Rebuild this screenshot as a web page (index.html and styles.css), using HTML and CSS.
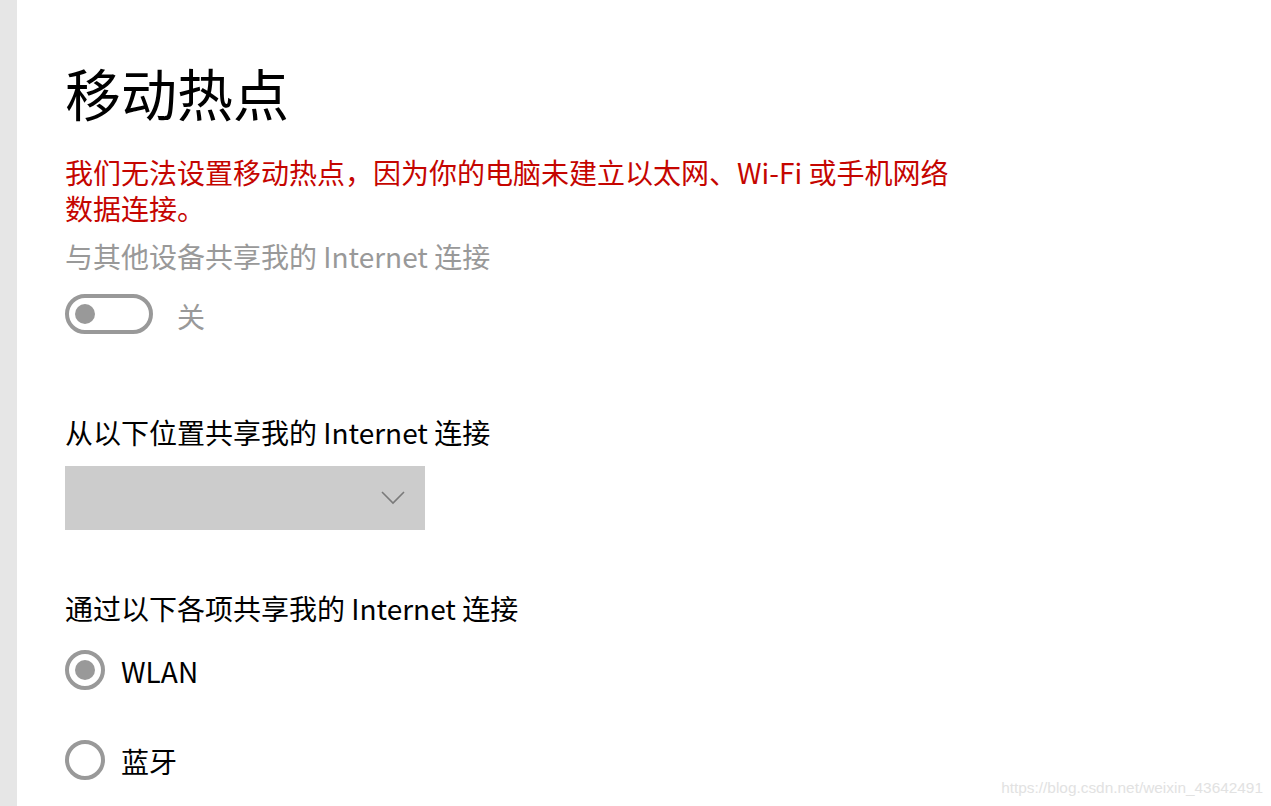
FILE: index.html
```html
<!DOCTYPE html>
<html lang="zh-CN">
<head>
<meta charset="utf-8">
<title>移动热点</title>
<link rel="stylesheet" href="styles.css">
</head>
<body>
<div class="page">
  <aside class="strip"></aside>
  <main class="main">
    <h1 class="title">移动热点</h1>
    <p class="error">我们无法设置移动热点，因为你的电脑未建立以太网、Wi-Fi 或手机网络数据连接。</p>
    <p class="label disabled">与其他设备共享我的 Internet 连接</p>
    <div class="toggle-row">
      <span class="toggle"><span class="knob"></span></span>
      <span class="toggle-text">关</span>
    </div>
    <p class="label section">从以下位置共享我的 Internet 连接</p>
    <div class="select">
      <svg class="chevron" width="24" height="14" viewBox="0 0 24 14"><path d="M1 1 L12 12 L23 1" fill="none" stroke="#7a7a7a" stroke-width="1.6"/></svg>
    </div>
    <p class="label section2">通过以下各项共享我的 Internet 连接</p>
    <div class="radio-row first">
      <span class="radio checked"><span class="dot"></span></span>
      <span class="radio-text">WLAN</span>
    </div>
    <div class="radio-row second">
      <span class="radio"></span>
      <span class="radio-text">蓝牙</span>
    </div>
  </main>
</div>
<div class="watermark">https://blog.csdn.net/weixin_43642491</div>
</body>
</html>
```

FILE: styles.css
```css
html, body {
  margin: 0;
  padding: 0;
  background: #ffffff;
}
body {
  width: 1271px;
  height: 806px;
  overflow: hidden;
  position: relative;
  font-family: "Noto Sans CJK SC", "Noto Sans", sans-serif;
  color: #000000;
}
.page {
  display: flex;
  height: 806px;
}
.strip {
  width: 17px;
  flex: none;
  background: #e6e6e6;
}
.main {
  padding-left: 48px;
  padding-top: 56px;
  display: flex;
  flex-direction: column;
  align-items: flex-start;
}
.title {
  margin: 0;
  font-size: 56px;
  line-height: 72px;
  font-weight: 400;
}
.error {
  margin: 26px 0 0;
  font-size: 28px;
  line-height: 36px;
  color: #c50500;
  width: 900px;
}
.label {
  margin: 0;
  font-size: 28px;
  line-height: 36px;
}
.disabled {
  margin-top: 12px;
  color: #999999;
}
.toggle-row {
  margin-top: 20px;
  display: flex;
  align-items: center;
  height: 40px;
}
.toggle {
  box-sizing: border-box;
  width: 88px;
  height: 40px;
  border: 4px solid #999999;
  border-radius: 20px;
  display: flex;
  align-items: center;
  padding-left: 6px;
}
.knob {
  width: 20px;
  height: 20px;
  border-radius: 50%;
  background: #999999;
}
.toggle-text {
  margin-left: 24px;
  font-size: 28px;
  line-height: 36px;
  color: #999999;
  position: relative;
  top: 2px;
}
.section {
  margin-top: 80px;
}
.select {
  margin-top: 16px;
  width: 360px;
  height: 64px;
  background: #cccccc;
  display: flex;
  align-items: center;
  justify-content: flex-end;
  padding-right: 20px;
  box-sizing: border-box;
}
.chevron {
  display: block;
}
.section2 {
  margin-top: 60px;
}
.radio-row {
  display: flex;
  align-items: center;
  height: 40px;
}
.radio-row.first {
  margin-top: 24px;
}
.radio-row.second {
  margin-top: 50px;
}
.radio {
  box-sizing: border-box;
  width: 40px;
  height: 40px;
  border: 4px solid #999999;
  border-radius: 50%;
  display: flex;
  align-items: center;
  justify-content: center;
}
.dot {
  width: 20px;
  height: 20px;
  border-radius: 50%;
  background: #999999;
}
.radio-text {
  margin-left: 16px;
  font-size: 28px;
  line-height: 36px;
  position: relative;
  top: 1px;
}
.watermark {
  position: absolute;
  right: 8px;
  bottom: 9px;
  font-family: "Liberation Sans", Arial, sans-serif;
  font-size: 15.4px;
  color: #e2e2e2;
}
```
